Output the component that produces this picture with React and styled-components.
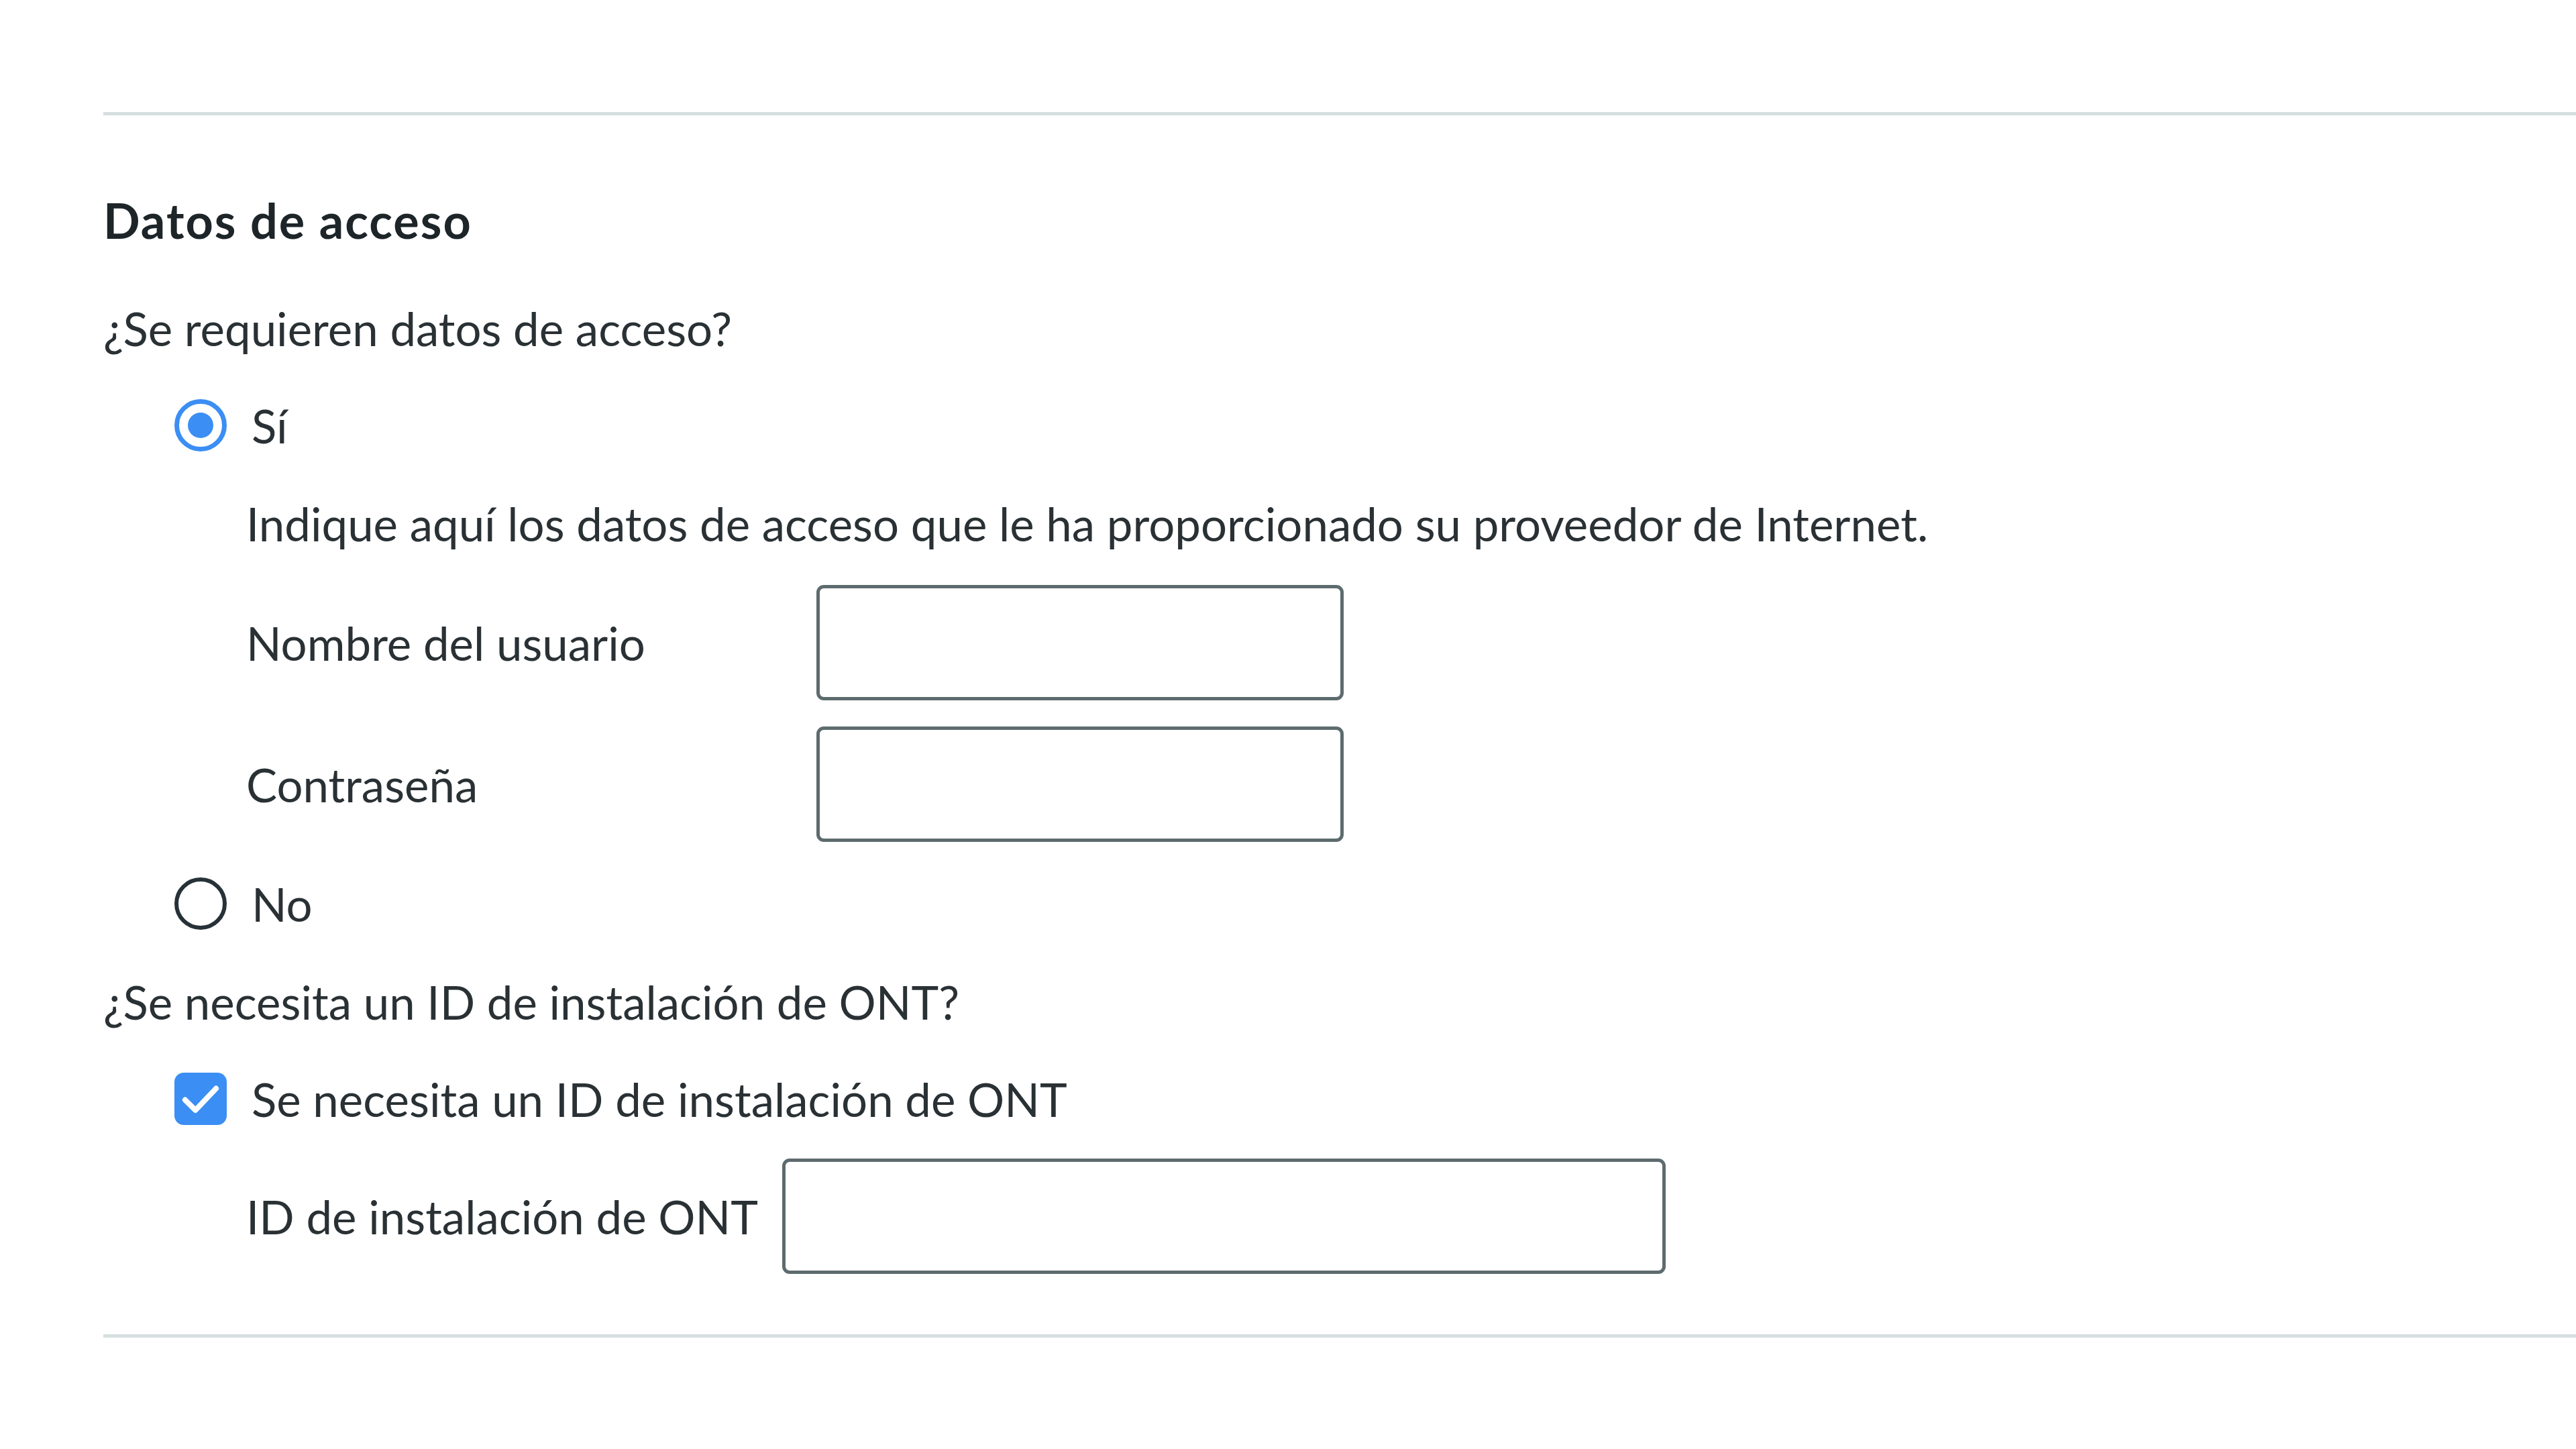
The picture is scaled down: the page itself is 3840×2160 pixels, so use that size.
import React from 'react';
import styled, { createGlobalStyle } from 'styled-components';

const GlobalStyle = createGlobalStyle`
  html, body {
    margin: 0;
    padding: 0;
    background: #fff;
  }
  body {
    font-family: Lato, "Open Sans", sans-serif;
    color: #2a3135;
  }
`;

const Page = styled.div`
  padding: 167px 0 0 154px;
  min-height: 2160px;
  box-sizing: border-box;
`;

const Section = styled.section`
  border-top: 5px solid #d6dfdf;
  border-bottom: 5px solid #d6dfdf;
  padding: 116px 0 90px 0;
`;

const Heading = styled.h2`
  margin: 0;
  font-size: 72px;
  line-height: 80px;
  font-weight: 700;
  letter-spacing: 2px;
  color: #1d2529;
`;

const Question = styled.p`
  margin: ${(p) => p.$top}px 0 0 0;
  font-size: 69px;
  line-height: 80px;
`;

const OptionRow = styled.label`
  display: flex;
  align-items: center;
  gap: 37px;
  height: 80px;
  margin: ${(p) => p.$top}px 0 0 106px;
  font-size: 69px;
`;

const RadioMark = styled.span`
  width: 78px;
  height: 78px;
  box-sizing: border-box;
  border-radius: 50%;
  border: ${(p) => (p.$checked ? '7px solid #3b8ef3' : '6px solid #263238')};
  display: flex;
  align-items: center;
  justify-content: center;
  flex-shrink: 0;

  &::after {
    content: '';
    display: ${(p) => (p.$checked ? 'block' : 'none')};
    width: 38px;
    height: 38px;
    border-radius: 50%;
    background: #3b8ef3;
  }
`;

const CheckMark = styled.span`
  width: 78px;
  height: 78px;
  border-radius: 14px;
  background: #3b8ef3;
  display: flex;
  align-items: center;
  justify-content: center;
  flex-shrink: 0;
`;

const Nested = styled.div`
  margin-left: 213px;
`;

const Hint = styled.p`
  margin: 67px 0 0 0;
  font-size: 69px;
  line-height: 80px;
`;

const FieldRow = styled.div`
  display: grid;
  grid-template-columns: ${(p) => p.$labelWidth}px ${(p) => p.$inputWidth}px;
  align-items: center;
  margin-top: ${(p) => p.$top}px;
  font-size: 69px;
`;

const Input = styled.input`
  height: 172px;
  box-sizing: border-box;
  border: 5px solid #5d6b6e;
  border-radius: 11px;
  background: #fff;
  font: inherit;
  padding: 0 24px;
  outline: none;
`;

const Radio = ({ checked, label, top }) => (
  <OptionRow $top={top}>
    <RadioMark $checked={checked} />
    <span>{label}</span>
  </OptionRow>
);

const Field = ({ label, top, labelWidth, inputWidth, type = 'text' }) => (
  <FieldRow $top={top} $labelWidth={labelWidth} $inputWidth={inputWidth}>
    <span>{label}</span>
    <Input type={type} />
  </FieldRow>
);

export default function App() {
  return (
    <>
      <GlobalStyle />
      <Page>
        <Section>
          <Heading>Datos de acceso</Heading>
          <Question $top={82}>¿Se requieren datos de acceso?</Question>
          <Radio checked label="Sí" top={64} />
          <Nested>
            <Hint>Indique aquí los datos de acceso que le ha proporcionado su proveedor de Internet.</Hint>
            <Field label="Nombre del usuario" top={51} labelWidth={850} inputWidth={786} />
            <Field label="Contraseña" top={39} labelWidth={850} inputWidth={786} type="password" />
          </Nested>
          <Radio label="No" top={52} />
          <Question $top={67}>¿Se necesita un ID de instalación de ONT?</Question>
          <OptionRow $top={64}>
            <CheckMark>
              <svg width="74" height="74" viewBox="0 0 24 24" fill="none" stroke="#fff" strokeWidth="2.6" strokeLinecap="round" strokeLinejoin="round">
                <path d="M4.5 12.5l5 5L19.5 7" />
              </svg>
            </CheckMark>
            <span>Se necesita un ID de instalación de ONT</span>
          </OptionRow>
          <Nested>
            <Field label="ID de instalación de ONT" top={49} labelWidth={799} inputWidth={1317} />
          </Nested>
        </Section>
      </Page>
    </>
  );
}
